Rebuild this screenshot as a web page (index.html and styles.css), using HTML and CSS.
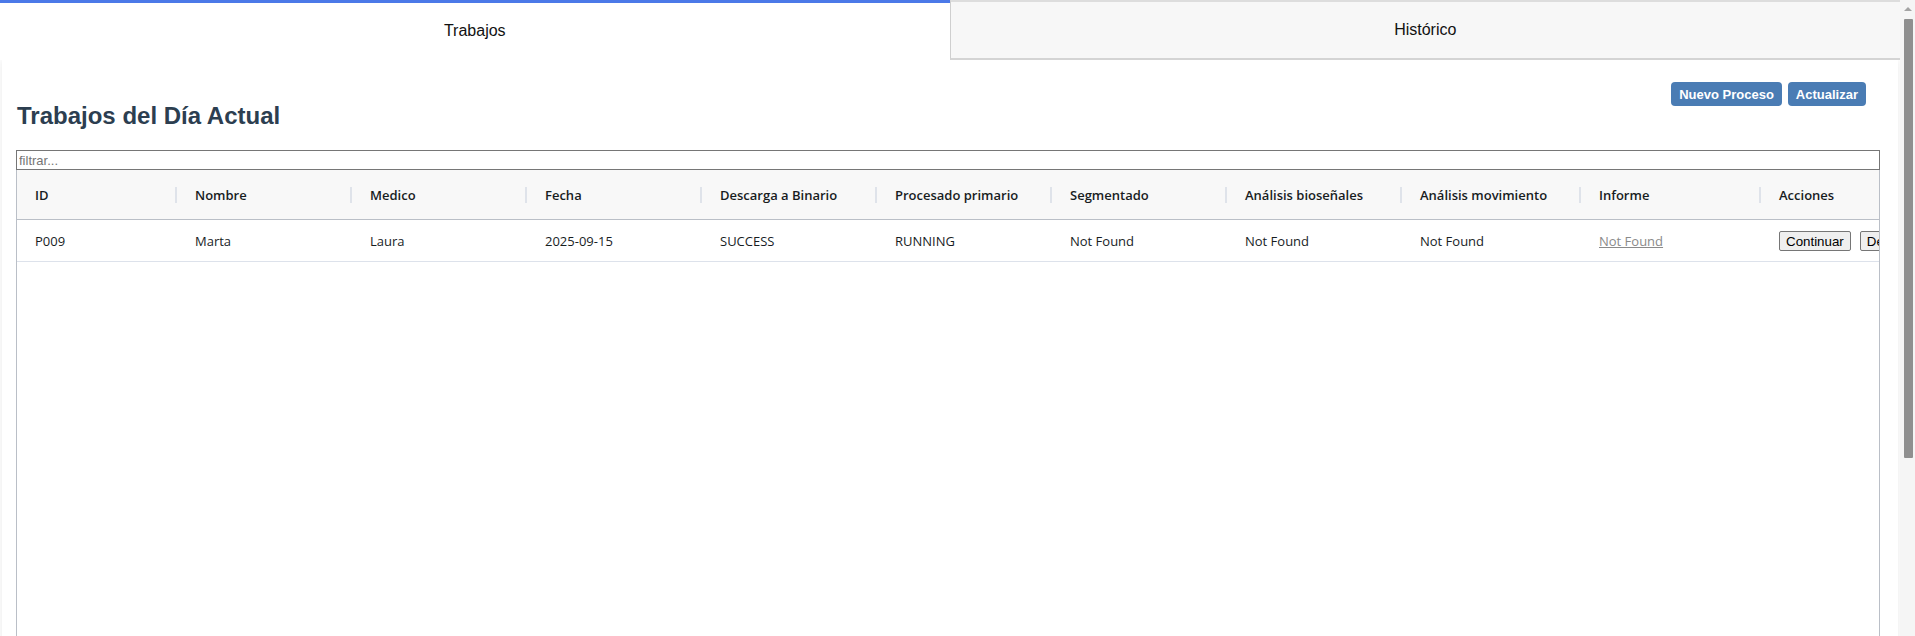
FILE: index.html
```html
<!DOCTYPE html>
<html lang="es">
<head>
<meta charset="utf-8">
<title>Trabajos</title>
<link rel="stylesheet" href="styles.css">
</head>
<body>
<div class="app">
  <div class="main">
    <div class="tabs">
      <div class="tab tab-active">Trabajos</div>
      <div class="tab">Histórico</div>
    </div>
    <div class="panel">
      <div class="panel-head">
        <h2 class="title">Trabajos del Día Actual</h2>
        <div class="actions">
          <button class="btn">Nuevo Proceso</button>
          <button class="btn">Actualizar</button>
        </div>
      </div>
      <input class="filter" type="text" placeholder="filtrar...">
      <div class="grid">
        <div class="grid-row grid-header">
          <div class="cell hcell">ID</div>
          <div class="cell hcell">Nombre</div>
          <div class="cell hcell">Medico</div>
          <div class="cell hcell">Fecha</div>
          <div class="cell hcell">Descarga a Binario</div>
          <div class="cell hcell">Procesado primario</div>
          <div class="cell hcell">Segmentado</div>
          <div class="cell hcell">Análisis bioseñales</div>
          <div class="cell hcell">Análisis movimiento</div>
          <div class="cell hcell">Informe</div>
          <div class="cell hcell hcell-last">Acciones</div>
        </div>
        <div class="grid-row grid-data">
          <div class="cell">P009</div>
          <div class="cell">Marta</div>
          <div class="cell">Laura</div>
          <div class="cell">2025-09-15</div>
          <div class="cell">SUCCESS</div>
          <div class="cell">RUNNING</div>
          <div class="cell">Not Found</div>
          <div class="cell">Not Found</div>
          <div class="cell">Not Found</div>
          <div class="cell"><a class="report-link" href="#">Not Found</a></div>
          <div class="cell cell-actions">
            <button class="row-btn">Continuar</button>
            <button class="row-btn">Detalles</button>
          </div>
        </div>
      </div>
    </div>
  </div>
  <div class="scrollbar" aria-hidden="true">
    <div class="sb-arrow"></div>
    <div class="sb-thumb"></div>
  </div>
</div>
</body>
</html>
```

FILE: styles.css
```css
html,
body {
  margin: 0;
  height: 100%;
  overflow: hidden;
  background: #ffffff;
}

body {
  font-family: "Liberation Sans", Arial, sans-serif;
  color: #000000;
}

.app {
  display: flex;
  height: 100vh;
}

.main {
  flex: 1 1 auto;
  min-width: 0;
  overflow: hidden;
}

/* scrollbar column */
.scrollbar {
  flex: 0 0 15px;
  display: flex;
  flex-direction: column;
  align-items: center;
  background: #f5f5f5;
}

.sb-arrow {
  width: 0;
  height: 0;
  margin-top: 7px;
  border-left: 4px solid transparent;
  border-right: 4px solid transparent;
  border-bottom: 4px solid #a3a3a3;
}

.sb-thumb {
  width: 9px;
  height: 439px;
  margin-top: 8px;
  margin-left: 1px;
  border-radius: 1px;
  background: #8f8f8f;
}

.tabs {
  display: flex;
  height: 60px;
}

.tab {
  flex: 1 1 0;
  display: flex;
  align-items: center;
  justify-content: center;
  font-size: 16px;
  color: #111111;
  background: #f7f7f7;
  border-top: 2px solid #dddddd;
  border-left: 1px solid #cfcfcf;
  border-bottom: 2px solid #d4d4d4;
  box-sizing: border-box;
}

.tab-active {
  background: #ffffff;
  border-top: 3px solid #4b79e8;
  border-left: none;
  border-bottom: none;
  padding-bottom: 1px;
}

.panel {
  margin: 0 2px;
  padding: 22px 18px 21px 14px;
  background: #ffffff;
  box-shadow: 0 0 8px rgba(0, 0, 0, 0.09);
}

.panel-head {
  display: flex;
  justify-content: space-between;
  align-items: flex-start;
}

.title {
  margin: 20px 0 20px 1px;
  font-size: 24px;
  line-height: 28px;
  font-weight: bold;
  color: #2c3e50;
}

.actions {
  display: flex;
  gap: 6px;
  margin-right: 14px;
}

.btn {
  height: 24px;
  padding: 0 8px;
  border: none;
  border-radius: 4px;
  background: #4a7cb4;
  color: #ffffff;
  font-family: "Liberation Sans", Arial, sans-serif;
  font-size: 13px;
  font-weight: bold;
}

.filter {
  display: block;
  width: 100%;
  height: 20px;
  box-sizing: border-box;
  margin: 0;
  padding: 1px 2px;
  border: 1px solid #767676;
  font-family: "Liberation Sans", Arial, sans-serif;
  font-size: 13px;
  outline: none;
}

.filter::placeholder {
  color: #757575;
}

.grid {
  height: 680px;
  box-sizing: border-box;
  border: 1px solid #babfc7;
  border-top: none;
  overflow: hidden;
  font-family: "Open Sans", sans-serif;
  font-size: 13px;
  color: #181d1f;
}

.grid-row {
  display: grid;
  grid-template-columns: 160px 175px 175px 175px 175px 175px 175px 175px 179px 180px 240px;
  width: max-content;
}

.grid-header {
  height: 49px;
  background: #f8f8f8;
  border-bottom: 1px solid #babfc7;
  font-weight: 600;
}

.grid-data {
  height: 41px;
  border-bottom: 1px solid #dde2eb;
}

.cell {
  display: flex;
  align-items: center;
  padding-left: 18px;
  padding-top: 1px;
  white-space: nowrap;
  overflow: hidden;
}

.hcell {
  background-image: linear-gradient(#dfe3ea, #dfe3ea);
  background-repeat: no-repeat;
  background-size: 2px 16px;
  background-position: right 0 center;
}

.hcell-last {
  background-image: none;
}

.report-link {
  color: #8a8a8a;
  text-decoration: underline;
}

.cell-actions {
  gap: 9px;
}

.row-btn {
  height: 20px;
  padding: 1px 6px;
  border: 1px solid #767676;
  border-radius: 2px;
  background: #efefef;
  color: #000000;
  font-family: "Liberation Sans", Arial, sans-serif;
  font-size: 13.33px;
}
```
